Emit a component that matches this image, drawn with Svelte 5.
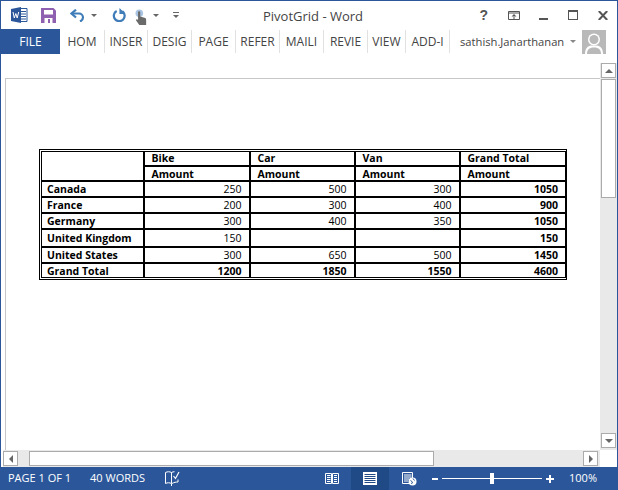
<script>
  const tabs = ["HOM", "INSER", "DESIG", "PAGE", "REFER", "MAILI", "REVIE", "VIEW", "ADD-I"];
  const tabWidths = [45, 43, 44, 44, 44, 44, 44, 38, 44];
  const rows = [
    { name: "Canada", vals: ["250", "500", "300"], total: "1050", h: 16 },
    { name: "France", vals: ["200", "300", "400"], total: "900", h: 16 },
    { name: "Germany", vals: ["300", "400", "350"], total: "1050", h: 16 },
    { name: "United Kingdom", vals: ["150", "", ""], total: "150", h: 18 },
    { name: "United States", vals: ["300", "650", "500"], total: "1450", h: 16 },
  ];
</script>

<div class="window">
  <header class="titlebar">
    <div class="qat">
      <svg class="ic-word" width="17" height="16" viewBox="0 0 17 16">
        <path d="M9 1.500h7v13H9z" fill="#fff" stroke="#2b579a" />
        <path d="M10 4.500h5M10 7h5M10 9.500h5M10 12h5" stroke="#2b579a" />
        <path d="M0 2 10 0v16L0 14z" fill="#2b579a" />
        <path d="M2 5l1.300 6 1.500-4.500L6.200 11l1.500-6" fill="none" stroke="#fff" />
      </svg>
      <svg class="ic-save" width="15" height="15" viewBox="0 0 15 15">
        <path d="M0 0h12.500L15 2.500V15H0z" fill="#8f5fb0" />
        <path d="M3 2h9v4.500H3z" fill="#fff" />
        <path d="M3.500 10h8v5h-8z" fill="#fff" />
        <path d="M7 11h2v4H7z" fill="#8f5fb0" />
      </svg>
      <svg class="ic-undo" width="15" height="13" viewBox="0 0 15 13">
        <path d="M6 .700 1.500 4.500 6 8.500" fill="none" stroke="#3f7cb8" stroke-width="2.200" />
        <path d="M2 4.500h7a4 4 0 0 1 4 4c0 2-1 3-3 4" fill="none" stroke="#3f7cb8" stroke-width="2.200" />
      </svg>
      <span class="caret dark"></span>
      <svg class="ic-redo" width="14" height="14" viewBox="0 0 15 15">
        <path d="M5 3.200a5.800 5.800 0 1 0 6 .300" fill="none" stroke="#3f7cb8" stroke-width="2.400" />
        <path d="M8 0v6.500H14.500z" fill="#3f7cb8" />
      </svg>
      <svg class="ic-touch" width="12" height="16" viewBox="0 0 14 19">
        <circle cx="5" cy="5" r="4.500" fill="#a9c4e2" />
        <path d="M3.500 4a1.300 1.300 0 0 1 2.600 0v5l5 1.500c1.500.5 2 1 2 2.500v6H5L1 13.500 2 12l1.500 1z" fill="#6a6a6a" />
      </svg>
      <span class="caret dark"></span>
      <span class="customize"><span class="dash"></span><span class="caret small"></span></span>
    </div>
    <div class="doc-title">PivotGrid - Word</div>
    <div class="winbtns">
      <span class="help">?</span>
      <svg width="12" height="9" viewBox="0 0 12 9">
        <path d="M.5.500h11v8H.5z" fill="none" stroke="#555" />
        <path d="M.5 2h11" stroke="#555" />
        <path d="M6 3 3.500 5.500h5zM5.500 5h1v3h-1z" fill="#555" />
      </svg>
      <span class="minimize"></span>
      <span class="maximize"></span>
      <svg width="10" height="9" viewBox="0 0 10 9">
        <path d="M.8 0 9.200 9M9.200 0 .8 9" stroke="#555" stroke-width="2" />
      </svg>
    </div>
  </header>

  <nav class="ribbon">
    <div class="file">FILE</div>
    {#each tabs as tab, i}
      <div class="tab" style="width: {tabWidths[i]}px">{tab}</div>
    {/each}
    <div class="user">
      <span class="user-name">sathish.Janarthanan</span>
      <span class="caret light"></span>
      <div class="avatar">
        <svg width="24" height="24" viewBox="0 0 24 24">
          <path d="M0 0h24v24H0z" fill="#b9b9b9" />
          <circle cx="12" cy="9.500" r="6" fill="#fff" />
          <path d="M3 24c0-6 3-8 6-8.500h6c3 .5 6 2.500 6 8.500z" fill="#fff" />
          <circle cx="12" cy="9.500" r="4.500" fill="#b9b9b9" />
          <path d="M5 24c0-4 2-6.500 7-6.500s7 2.500 7 6.500z" fill="#b9b9b9" />
        </svg>
      </div>
    </div>
  </nav>

  <main class="workspace">
    <div class="doc-row">
      <div class="canvas">
        <div class="page">
          <div class="table-frame">
            <table>
              <colgroup>
                <col class="c-name" />
                <col class="c-bike" />
                <col class="c-val" />
                <col class="c-val" />
                <col class="c-last" />
              </colgroup>
              <tbody>
                <tr class="h1">
                  <td rowspan="2"></td>
                  <td class="b">Bike</td>
                  <td class="b">Car</td>
                  <td class="b">Van</td>
                  <td class="b">Grand Total</td>
                </tr>
                <tr class="h2">
                  <td class="b">Amount</td>
                  <td class="b">Amount</td>
                  <td class="b">Amount</td>
                  <td class="b">Amount</td>
                </tr>
                {#each rows as row}
                  <tr style="height: {row.h}px">
                    <td class="b name">{row.name}</td>
                    {#each row.vals as val}
                      <td class="num">{val}</td>
                    {/each}
                    <td class="num b">{row.total}</td>
                  </tr>
                {/each}
                <tr class="h2">
                  <td class="b name">Grand Total</td>
                  <td class="num b">1200</td>
                  <td class="num b">1850</td>
                  <td class="num b">1550</td>
                  <td class="num b">4600</td>
                </tr>
              </tbody>
            </table>
          </div>
        </div>
      </div>
      <aside class="vscroll">
        <div class="sbtn"><span class="tri up"></span></div>
        <div class="vthumb"></div>
        <div class="vtrack"></div>
        <div class="sbtn"><span class="tri down"></span></div>
      </aside>
    </div>
    <div class="hscroll">
      <div class="sbtn"><span class="tri left"></span></div>
      <div class="hgap"></div>
      <div class="hthumb"></div>
      <div class="htrack"></div>
      <div class="sbtn"><span class="tri right"></span></div>
      <div class="corner"></div>
    </div>
  </main>

  <footer class="status">
    <span class="st-page">PAGE 1 OF 1</span>
    <span class="st-words">40 WORDS</span>
    <svg class="st-proof" width="15" height="15" viewBox="0 0 15 15">
      <path d="M.5 1.500c2-1 4-1 6 0v11c-2-1-4-1-6 0zM6.500 1.500c1-.5 2-.8 3-.8M13 8.500v2.500c-2 0-4 .3-6 1.500" fill="none" stroke="#fff" />
      <path d="M8.500 5l2 2.500L14 1" fill="none" stroke="#fff" stroke-width="1.200" />
      <path d="M6.500 12.500v2.500" stroke="#fff" />
    </svg>
    <div class="st-right">
      <svg class="view-read" width="14" height="13" viewBox="0 0 14 13">
        <path d="M.5 1.500h6v10h-6zM7.500 1.500h6v10h-6z" fill="none" stroke="#fff" />
        <path d="M2 3.500h3.500M2 5.500h3.500M2 7.500h3.500M2 9.500h3.500M9 3.500h3M9 5.500h3M9 7.500h3M9 9.500h3" stroke="#fff" />
      </svg>
      <div class="view-print">
        <svg width="14" height="13" viewBox="0 0 14 13">
          <path d="M0 0h14v13H0z" fill="#fff" />
          <path d="M1.500 2.500h11M1.500 4.500h11M1.500 6.500h11M1.500 8.500h11M1.500 10.500h11" stroke="#1f4a86" />
        </svg>
      </div>
      <svg class="view-web" width="15" height="14" viewBox="0 0 15 14">
        <path d="M.5.500h10v11H.5z" fill="none" stroke="#fff" />
        <path d="M2 3h7.500M2 5h7.500M2 7h5M2 9h4" stroke="#fff" />
        <circle cx="10.500" cy="9.500" r="4" fill="#fff" />
        <path d="M8.500 8.500l2 1.500-1 2M11 6.500l1.500 2" stroke="#2b579a" fill="none" />
      </svg>
      <span class="zoom-minus"></span>
      <div class="slider"><span class="knob"></span></div>
      <span class="zoom-plus"></span>
      <span class="zoom-val">100%</span>
    </div>
  </footer>
</div>

<style>
  :global(body) {
    margin: 0;
    background: #fff;
  }
  .window {
    width: 618px;
    height: 490px;
    box-sizing: border-box;
    display: flex;
    flex-direction: column;
    border: 1px solid #2b579a;
    border-bottom: none;
    font-family: "Open Sans", "Noto Sans", sans-serif;
    overflow: hidden;
    background: #fff;
  }
  .titlebar {
    height: 28px;
    display: flex;
    align-items: center;
    position: relative;
    flex: none;
  }
  .qat {
    display: flex;
    align-items: center;
    padding-left: 10px;
  }
  .ic-save {
    margin-left: 13px;
  }
  .ic-undo {
    margin-left: 14px;
  }
  .ic-redo {
    margin-left: 15px;
  }
  .ic-touch {
    margin-left: 9px;
    margin-top: 3px;
  }
  .caret {
    width: 0;
    height: 0;
    border-left: 3px solid transparent;
    border-right: 3px solid transparent;
    border-top: 3px solid #666;
  }
  .caret.dark {
    margin-left: 6px;
  }
  .caret.small {
    display: block;
    margin-top: 2px;
  }
  .caret.light {
    margin-left: 7px;
    border-top-color: #888;
  }
  .customize {
    margin-left: 14px;
    display: flex;
    flex-direction: column;
    align-items: center;
  }
  .dash {
    width: 6px;
    height: 1px;
    background: #666;
  }
  .doc-title {
    position: absolute;
    left: 262px;
    top: 5px;
    font-size: 13px;
    line-height: 20px;
    color: #444;
  }
  .winbtns {
    margin-left: auto;
    display: flex;
    align-items: center;
    padding-right: 9px;
  }
  .help {
    font-family: "Liberation Sans", sans-serif;
    font-weight: 700;
    font-size: 14px;
    color: #555;
    margin-right: 20px;
  }
  .minimize {
    width: 9px;
    height: 2px;
    background: #555;
    margin: 8px 0 0 19px;
  }
  .maximize {
    width: 8px;
    height: 7px;
    border: 1px solid #555;
    border-top-width: 2px;
    margin: 0 20px 0 20px;
  }
  .ribbon {
    height: 25px;
    display: flex;
    align-items: stretch;
    flex: none;
  }
  .file {
    width: 59px;
    background: #2b579a;
    color: #fff;
    font-size: 12px;
    line-height: 25px;
    text-align: center;
  }
  .tab {
    box-sizing: border-box;
    height: 23px;
    margin-top: 1px;
    line-height: 23px;
    font-size: 12px;
    color: #444;
    text-align: center;
    border-right: 1px solid #e1e1e1;
  }
  .tab:first-of-type {
    margin-left: 1px;
  }
  .user {
    flex: 1;
    display: flex;
    align-items: center;
    padding-left: 10px;
    font-size: 11.2px;
    color: #444;
  }
  .user-name {
    width: 103px;
    white-space: nowrap;
  }
  .avatar {
    margin-left: 6px;
    display: flex;
  }
  .workspace {
    flex: 1;
    display: flex;
    flex-direction: column;
    min-height: 0;
  }
  .doc-row {
    flex: 1;
    display: flex;
    min-height: 0;
  }
  .canvas {
    flex: 1;
    padding: 24px 0 0 4px;
    display: flex;
  }
  .page {
    flex: 1;
    border-top: 1px solid #c6c6c6;
    border-left: 1px solid #c6c6c6;
    padding: 70px 0 0 33px;
  }
  .table-frame {
    width: 524px;
    border: 1px solid #000;
    padding: 1px;
  }
  table {
    border-collapse: collapse;
    table-layout: fixed;
    width: 524px;
    font-family: "Open Sans", "Noto Sans", sans-serif;
    font-size: 10.5px;
    color: #000;
  }
  .c-name {
    width: 102px;
  }
  .c-bike {
    width: 106px;
  }
  .c-val {
    width: 105px;
  }
  .c-last {
    width: 106px;
  }
  td {
    border: 2px solid #000;
    padding: 1px 7px 0 7px;
    line-height: 12px;
    white-space: nowrap;
  }
  td.name {
    padding-left: 5px;
  }
  tr:first-child td {
    border-top-width: 1px;
    padding-top: 0;
  }
  tr:last-child td {
    border-bottom-width: 1px;
  }
  td:first-child {
    border-left-width: 1px;
  }
  td:last-child {
    border-right-width: 1px;
  }
  .h1 {
    height: 14px;
  }
  .h2 {
    height: 15px;
  }
  .b {
    font-weight: 700;
  }
  .num {
    text-align: right;
  }
  .vscroll {
    width: 17px;
    flex: none;
    box-sizing: border-box;
    padding: 0 0 2px 1px;
    background: #e9e9e9;
    display: flex;
    flex-direction: column;
    margin-top: 9px;
  }
  .sbtn {
    width: 15px;
    height: 15px;
    flex: none;
    box-sizing: border-box;
    background: #fff;
    border: 1px solid #ababab;
    display: flex;
    align-items: center;
    justify-content: center;
  }
  .vthumb {
    width: 15px;
    box-sizing: border-box;
    height: 119px;
    margin-top: 1px;
    flex: none;
    background: #fff;
    border: 1px solid #ababab;
  }
  .vtrack {
    flex: 1;
  }
  .hscroll {
    height: 17px;
    flex: none;
    box-sizing: border-box;
    padding-top: 1px;
    display: flex;
    background: #e9e9e9;
    margin-left: 2px;
  }
  .hgap {
    width: 11px;
  }
  .hthumb {
    width: 405px;
    box-sizing: border-box;
    background: #fff;
    border: 1px solid #ababab;
    height: 15px;
  }
  .htrack {
    flex: 1;
  }
  .corner {
    width: 17px;
    margin: -1px 0 0 2px;
    background: #fff;
  }
  .tri {
    width: 0;
    height: 0;
    display: block;
  }
  .tri.up {
    border-left: 4px solid transparent;
    border-right: 4px solid transparent;
    border-bottom: 4px solid #666;
  }
  .tri.down {
    border-left: 4px solid transparent;
    border-right: 4px solid transparent;
    border-top: 4px solid #666;
  }
  .tri.left {
    border-top: 4px solid transparent;
    border-bottom: 4px solid transparent;
    border-right: 4px solid #666;
  }
  .tri.right {
    border-top: 4px solid transparent;
    border-bottom: 4px solid transparent;
    border-left: 4px solid #666;
  }
  .status {
    height: 23px;
    margin: 0 -1px;
    flex: none;
    box-sizing: border-box;
    padding: 0 0 0 8px;
    background: #2b579a;
    color: #fff;
    font-size: 11px;
    line-height: 21px;
    display: flex;
    align-items: center;
  }
  .st-page, .st-words {
    margin-bottom: 2px;
  }
  .st-words {
    margin-left: 19px;
  }
  .st-proof {
    margin-left: 20px;
  }
  .st-right {
    margin-left: auto;
    display: flex;
    align-items: center;
    height: 100%;
    padding-right: 21px;
  }
  .view-print {
    width: 38px;
    height: 100%;
    background: #1f4a86;
    display: flex;
    align-items: center;
    justify-content: center;
    margin-left: 12px;
  }
  .view-web {
    margin-left: 13px;
  }
  .zoom-minus {
    width: 6px;
    height: 2px;
    background: #fff;
    margin-left: 15px;
  }
  .slider {
    width: 100px;
    height: 1px;
    background: #fff;
    margin-left: 4px;
    position: relative;
  }
  .knob {
    position: absolute;
    left: 48px;
    top: -5px;
    width: 4px;
    height: 11px;
    background: #fff;
  }
  .zoom-plus {
    width: 8px;
    height: 8px;
    margin-left: 4px;
    background:
      linear-gradient(#fff, #fff) center / 8px 2px no-repeat,
      linear-gradient(#fff, #fff) center / 2px 8px no-repeat;
  }
  .zoom-val {
    margin: 0 0 2px 15px;
  }
</style>
